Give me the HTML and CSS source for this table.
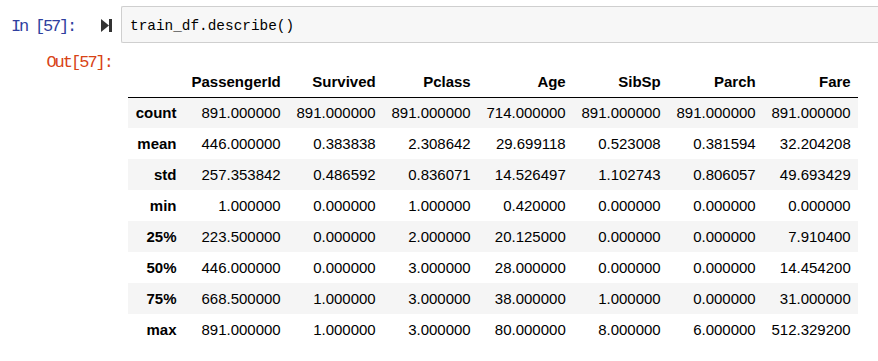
FILE: index.html
```html
<!DOCTYPE html>
<html lang="en">
<head>
    <meta charset="UTF-8">
    <title>train_df.describe()</title>
    <link rel="stylesheet" href="styles.css">
</head>
<body>
    <div class="cell-in">
        <div class="prompt-in">In [57]:</div>
        <svg class="run-icon" width="11" height="15" viewBox="0 0 11 15">
            <path d="M0 1 L8 7.5 L0 14 Z" fill="#333"/>
            <rect x="8" y="1" width="3" height="13" fill="#333"/>
        </svg>
        <div class="input-area">train_df.describe()</div>
    </div>

    <div class="cell-out">
        <div class="prompt-out">Out[57]:</div>
        <div class="output-area">
            <table class="dataframe">
                <thead>
                    <tr>
                        <th class="col-index"></th>
                        <th class="col-wide">PassengerId</th>
                        <th>Survived</th>
                        <th>Pclass</th>
                        <th>Age</th>
                        <th>SibSp</th>
                        <th>Parch</th>
                        <th>Fare</th>
                    </tr>
                </thead>
                <tbody>
                    <tr><th>count</th><td>891.000000</td><td>891.000000</td><td>891.000000</td><td>714.000000</td><td>891.000000</td><td>891.000000</td><td>891.000000</td></tr>
                    <tr><th>mean</th><td>446.000000</td><td>0.383838</td><td>2.308642</td><td>29.699118</td><td>0.523008</td><td>0.381594</td><td>32.204208</td></tr>
                    <tr><th>std</th><td>257.353842</td><td>0.486592</td><td>0.836071</td><td>14.526497</td><td>1.102743</td><td>0.806057</td><td>49.693429</td></tr>
                    <tr><th>min</th><td>1.000000</td><td>0.000000</td><td>1.000000</td><td>0.420000</td><td>0.000000</td><td>0.000000</td><td>0.000000</td></tr>
                    <tr><th>25%</th><td>223.500000</td><td>0.000000</td><td>2.000000</td><td>20.125000</td><td>0.000000</td><td>0.000000</td><td>7.910400</td></tr>
                    <tr><th>50%</th><td>446.000000</td><td>0.000000</td><td>3.000000</td><td>28.000000</td><td>0.000000</td><td>0.000000</td><td>14.454200</td></tr>
                    <tr><th>75%</th><td>668.500000</td><td>1.000000</td><td>3.000000</td><td>38.000000</td><td>1.000000</td><td>0.000000</td><td>31.000000</td></tr>
                    <tr><th>max</th><td>891.000000</td><td>1.000000</td><td>3.000000</td><td>80.000000</td><td>8.000000</td><td>6.000000</td><td>512.329200</td></tr>
                </tbody>
            </table>
        </div>
    </div>
</body>
</html>
```

FILE: styles.css
```css
body {
    margin: 0;
    background: #fff;
    font-family: "Liberation Sans", Arial, sans-serif;
    overflow: hidden;
}
.cell-in {
    display: flex;
    align-items: center;
    margin-top: 6px;
    height: 37px;
}
.prompt-in {
    width: 101px;
    padding: 3px 0 0 11px;
    box-sizing: border-box;
    font-family: "Liberation Mono", "DejaVu Sans Mono", monospace;
    font-size: 17px;
    letter-spacing: -2.2px;
    color: #303f9f;
}
.run-icon {
    display: block;
    margin: 2px 9px 0 0;
}
.input-area {
    flex: 1;
    height: 37px;
    box-sizing: border-box;
    background: #f7f7f7;
    border: 1px solid #cfcfcf;
    border-right: none;
    border-radius: 2px 0 0 2px;
    padding: 10px 8px 0;
    font-family: "Liberation Mono", "DejaVu Sans Mono", monospace;
    font-size: 14.4px;
    line-height: 19px;
    color: #000;
}
.cell-out {
    display: flex;
    margin-top: 6px;
}
.prompt-out {
    width: 121px;
    box-sizing: border-box;
    padding: 4px 9px 0 0;
    text-align: right;
    font-family: "Liberation Mono", "DejaVu Sans Mono", monospace;
    font-size: 17px;
    letter-spacing: -2px;
    line-height: 20px;
    color: #d84315;
}
.output-area {
    padding: 17px 0 0 7px;
}
.dataframe {
    border-collapse: collapse;
    font-size: 15px;
    color: #000;
}
.dataframe th,
.dataframe td {
    height: 31px;
    padding: 0 7.5px;
    text-align: right;
    vertical-align: middle;
    white-space: nowrap;
    box-sizing: border-box;
}
.dataframe th {
    font-weight: bold;
}
.dataframe thead th {
    width: 95px;
    border-bottom: 1px solid #000;
}
.dataframe thead .col-index {
    width: 56px;
}
.dataframe thead .col-wide {
    width: 104px;
}
.dataframe tbody tr:nth-child(odd) {
    background: #f5f5f5;
}
```
